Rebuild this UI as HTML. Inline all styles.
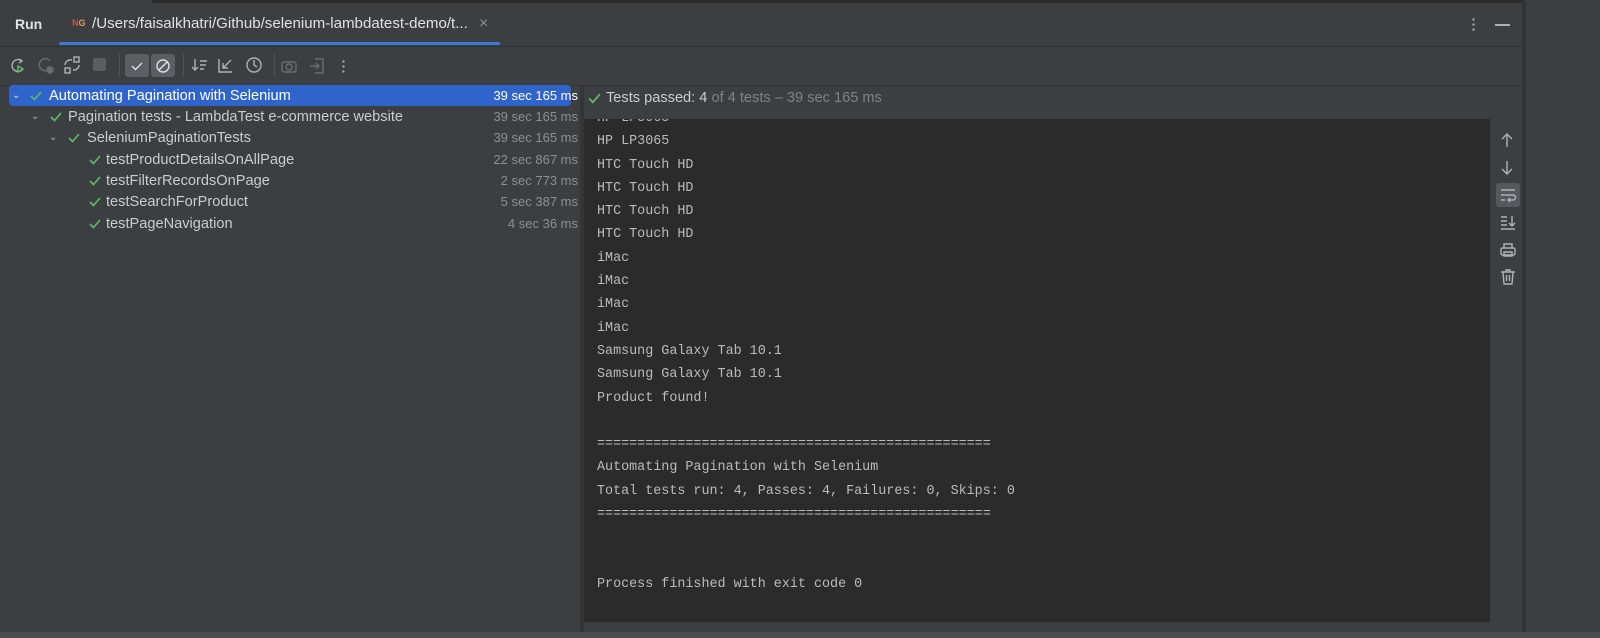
<!DOCTYPE html>
<html><head><meta charset="utf-8"><style>
*{margin:0;padding:0;box-sizing:border-box}
body{width:1600px;height:638px;background:#3c3f41;font-family:"Liberation Sans",sans-serif;position:relative;overflow:hidden;color:#dfe1e5}
.abs{position:absolute}
.mono{font-family:"Liberation Mono",monospace;font-size:13.4px;color:#bbbbbb;white-space:pre}
.row{position:absolute;height:21px;font-size:14.6px;line-height:22px;color:#c9ccd1;left:0;width:580px}
.row .t{position:absolute;right:2px;color:#8c8f94;font-size:13px}
.ck{position:absolute;top:4px}
.ic{position:absolute;stroke:#aeb2b8;fill:none;stroke-width:1.4}
</style></head><body>
<div class="abs" style="left:152px;top:0;width:1370px;height:3px;background:#2b2b2b"></div>
<div class="abs" style="left:1522px;top:0;width:4px;height:638px;background:#313335"></div>
<div class="abs" style="left:1526px;top:0;width:74px;height:638px;background:#3d3f42"></div>
<div class="abs" style="left:0;top:46px;width:1522px;height:1px;background:#2f3133"></div>
<div class="abs" style="left:0;top:85px;width:1522px;height:1px;background:#333537"></div>
<div class="abs" style="left:0;top:632px;width:1600px;height:6px;background:#4a4c4f"></div>
<div class="abs" style="left:0;top:624px;width:1522px;height:8px;background:#3c3f41"></div>

<div class="abs" style="left:15px;top:16px;font-size:14px;font-weight:bold;color:#dfe1e5">Run</div>
<div class="abs" style="left:72px;top:18px;font-size:9px;color:#c75450;font-weight:bold">N<span style="color:#c9a45c">G</span></div>
<div class="abs" style="left:92px;top:15px;font-size:15.1px;color:#dfe1e5">/Users/faisalkhatri/Github/selenium-lambdatest-demo/t...</div>
<div class="abs" style="left:479px;top:15px;font-size:16px;color:#8c8f94">×</div>
<div class="abs" style="left:59px;top:42px;width:441px;height:3px;background:#3d7ad6;border-radius:2px"></div>
<div class="abs" style="left:1472px;top:17px;width:3px;height:14px;background:radial-gradient(circle,#aeb2b8 1px,transparent 1.3px) 0 0/3px 5px"></div>
<div class="abs" style="left:1495px;top:24px;width:15px;height:1.5px;background:#aeb2b8"></div>

<!-- toolbar -->
<svg class="ic" style="left:8px;top:56px" width="20" height="20" viewBox="0 0 20 20"><path d="M14 5a6 6 0 1 0 1 8"/><path d="M11 3l3 2-3 2"/><path d="M10 10l5 3-5 3z" stroke="#5fb865"/></svg>
<svg class="ic" style="left:36px;top:56px;opacity:.4" width="20" height="20" viewBox="0 0 20 20"><path d="M14 5a6 6 0 1 0-2 9"/><circle cx="14" cy="14" r="3" fill="#aeb2b8"/></svg>
<svg class="ic" style="left:62px;top:55px" width="20" height="20" viewBox="0 0 20 20"><rect x="12" y="2" width="5" height="5"/><rect x="3" y="13" width="5" height="5"/><path d="M3 10a5 5 0 0 1 5-5h2M17 10a5 5 0 0 1-5 5h-1"/></svg>
<div class="abs" style="left:93px;top:58px;width:13px;height:13px;background:#5a5d61;border-radius:2px"></div>
<div class="abs" style="left:119px;top:53px;width:1px;height:24px;background:#4e5155"></div>
<div class="abs" style="left:125px;top:54px;width:24px;height:23px;background:#5b5e62;border-radius:3px"></div>
<svg class="ic" style="left:128px;top:57px;stroke:#dfe1e5" width="18" height="18" viewBox="0 0 18 18"><path d="M4 9l3.5 3.5L14 6"/></svg>
<div class="abs" style="left:151px;top:54px;width:24px;height:23px;background:#5b5e62;border-radius:3px"></div>
<svg class="ic" style="left:154px;top:57px;stroke:#dfe1e5" width="18" height="18" viewBox="0 0 18 18"><circle cx="9" cy="9" r="6"/><path d="M5 13l8-8"/></svg>
<div class="abs" style="left:183px;top:53px;width:1px;height:24px;background:#4e5155"></div>
<svg class="ic" style="left:190px;top:56px" width="20" height="20" viewBox="0 0 20 20"><path d="M5 3v11M2 11l3 3 3-3M10 5h7M10 9h6M10 13h4"/></svg>
<svg class="ic" style="left:216px;top:56px" width="20" height="20" viewBox="0 0 20 20"><path d="M3 3v13h13M7 12l8-8M7 7v5h5"/></svg>
<svg class="ic" style="left:244px;top:55px" width="20" height="20" viewBox="0 0 20 20"><circle cx="10" cy="10" r="7"/><path d="M10 5v5l3 2"/></svg>
<div class="abs" style="left:274px;top:53px;width:1px;height:24px;background:#4e5155"></div>
<svg class="ic" style="left:279px;top:56px;opacity:.4" width="20" height="20" viewBox="0 0 20 20"><rect x="3" y="6" width="14" height="10" rx="2"/><circle cx="10" cy="11" r="3"/></svg>
<svg class="ic" style="left:307px;top:56px;opacity:.4" width="20" height="20" viewBox="0 0 20 20"><path d="M8 3h8v14H8M3 10h9M9 7l3 3-3 3"/></svg>
<div class="abs" style="left:342px;top:59px;width:3px;height:14px;background:radial-gradient(circle,#aeb2b8 1px,transparent 1.3px) 0 0/3px 5px"></div>

<!-- tree -->
<div class="abs" style="left:9px;top:85px;width:562px;height:21px;background:#2f65ca;border-radius:4px"></div>
<div class="row" style="top:85px;color:#fff"><span class="abs" style="left:12px;font-size:10px;color:#dfe1e5">⌄</span><svg class="ck" style="left:29px" width="14" height="14" viewBox="0 0 14 14"><path d="M2 7l3.5 3.5L12 3" stroke="#5fb865" stroke-width="1.7" fill="none"/></svg><span class="abs" style="left:49px">Automating Pagination with Selenium</span><span class="t" style="color:#fff">39 sec 165 ms</span></div>
<div class="row" style="top:106px"><span class="abs" style="left:31px;font-size:10px;color:#aeb2b8">⌄</span><svg class="ck" style="left:49px" width="14" height="14" viewBox="0 0 14 14"><path d="M2 7l3.5 3.5L12 3" stroke="#5fb865" stroke-width="1.7" fill="none"/></svg><span class="abs" style="left:68px">Pagination tests - LambdaTest e-commerce website</span><span class="t">39 sec 165 ms</span></div>
<div class="row" style="top:127.3px"><span class="abs" style="left:49px;font-size:10px;color:#aeb2b8">⌄</span><svg class="ck" style="left:67px" width="14" height="14" viewBox="0 0 14 14"><path d="M2 7l3.5 3.5L12 3" stroke="#5fb865" stroke-width="1.7" fill="none"/></svg><span class="abs" style="left:87px">SeleniumPaginationTests</span><span class="t">39 sec 165 ms</span></div>
<div class="row" style="top:148.6px"><svg class="ck" style="left:88px" width="14" height="14" viewBox="0 0 14 14"><path d="M2 7l3.5 3.5L12 3" stroke="#5fb865" stroke-width="1.7" fill="none"/></svg><span class="abs" style="left:106px">testProductDetailsOnAllPage</span><span class="t">22 sec 867 ms</span></div>
<div class="row" style="top:169.9px"><svg class="ck" style="left:88px" width="14" height="14" viewBox="0 0 14 14"><path d="M2 7l3.5 3.5L12 3" stroke="#5fb865" stroke-width="1.7" fill="none"/></svg><span class="abs" style="left:106px">testFilterRecordsOnPage</span><span class="t">2 sec 773 ms</span></div>
<div class="row" style="top:191.2px"><svg class="ck" style="left:88px" width="14" height="14" viewBox="0 0 14 14"><path d="M2 7l3.5 3.5L12 3" stroke="#5fb865" stroke-width="1.7" fill="none"/></svg><span class="abs" style="left:106px">testSearchForProduct</span><span class="t">5 sec 387 ms</span></div>
<div class="row" style="top:212.5px"><svg class="ck" style="left:88px" width="14" height="14" viewBox="0 0 14 14"><path d="M2 7l3.5 3.5L12 3" stroke="#5fb865" stroke-width="1.7" fill="none"/></svg><span class="abs" style="left:106px">testPageNavigation</span><span class="t">4 sec 36 ms</span></div>

<div class="abs" style="left:580px;top:86px;width:4px;height:546px;background:#333537"></div>
<!-- status -->
<svg class="abs" style="left:587px;top:91px" width="15" height="15" viewBox="0 0 14 14"><path d="M2 7l3.5 3.5L12 3" stroke="#5fb865" stroke-width="1.7" fill="none"/></svg>
<div class="abs" style="left:606px;top:90px;font-size:14.6px;color:#c9ccd1">Tests passed: 4 <span style="color:#7f8287">of 4 tests – 39 sec 165 ms</span></div>

<!-- console -->
<div class="abs" style="left:584px;top:119px;width:906px;height:503px;background:#2b2b2b;overflow:hidden">
<div class="mono" style="position:absolute;left:13px;top:-12px;line-height:23.3px">HP LP3065
HP LP3065
HTC Touch HD
HTC Touch HD
HTC Touch HD
HTC Touch HD
iMac
iMac
iMac
iMac
Samsung Galaxy Tab 10.1
Samsung Galaxy Tab 10.1
Product found!

=================================================
Automating Pagination with Selenium
Total tests run: 4, Passes: 4, Failures: 0, Skips: 0
=================================================


Process finished with exit code 0</div></div>

<!-- right icons -->
<svg class="ic" style="left:1498px;top:131px" width="18" height="18" viewBox="0 0 18 18"><path d="M9 16V3M4 8l5-5 5 5"/></svg>
<svg class="ic" style="left:1498px;top:159px" width="18" height="18" viewBox="0 0 18 18"><path d="M9 2v13M4 10l5 5 5-5"/></svg>
<div class="abs" style="left:1496px;top:183px;width:24px;height:24px;background:#55585c;border-radius:3px"></div>
<svg class="ic" style="left:1499px;top:186px" width="18" height="18" viewBox="0 0 18 18"><path d="M2 4h14M2 9h12a2.5 2.5 0 0 1 0 5H9M11 12l-2 2 2 2M2 14h4"/></svg>
<svg class="ic" style="left:1499px;top:213px" width="18" height="18" viewBox="0 0 18 18"><path d="M2 4h6M2 8h6M2 12h6M2 16h14M13 3v10M10 10l3 3 3-3"/></svg>
<svg class="ic" style="left:1499px;top:241px" width="18" height="18" viewBox="0 0 18 18"><rect x="2" y="7" width="14" height="7" rx="1.5"/><path d="M5 7V3h8v4M5 11h8v4H5z"/></svg>
<svg class="ic" style="left:1499px;top:268px" width="18" height="18" viewBox="0 0 18 18"><path d="M2 4h14M7 4V2h4v2M4 4l1 12h8l1-12M7.5 7v6M10.5 7v6"/></svg>
</body></html>
